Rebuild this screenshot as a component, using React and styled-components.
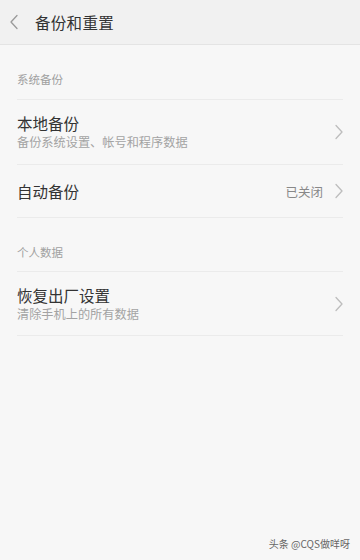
import React from "react";
import styled, { createGlobalStyle } from "styled-components";

const Global = createGlobalStyle`
  html, body { margin: 0; padding: 0; background: #f7f7f7; }
  body { font-family: "Noto Sans CJK SC", "Noto Sans", sans-serif; }
`;

const Page = styled.div`
  width: 360px;
  height: 560px;
  background: #f7f7f7;
  display: flex;
  flex-direction: column;
  position: relative;
  overflow: hidden;
`;

const Header = styled.div`
  height: 45px;
  background: #f1f1f1;
  border-bottom: 1px solid #e4e4e4;
  display: flex;
  align-items: center;
  padding-left: 9px;
  gap: 16px;
  box-sizing: border-box;
`;

const Title = styled.div`
  font-size: 15.5px;
  color: #333;
  letter-spacing: 0.3px;
`;

const Content = styled.div`
  padding: 0 17px;
  display: flex;
  flex-direction: column;
`;

const SectionTitle = styled.div`
  font-size: 11.5px;
  color: #a0a0a0;
  height: ${p => p.$h}px;
  display: flex;
  align-items: center;
  padding-top: 14px;
  box-sizing: border-box;
  border-bottom: 1px solid #ebebeb;
`;

const Row = styled.div`
  height: ${p => p.$h}px;
  display: flex;
  align-items: center;
  border-bottom: 1px solid #ebebeb;
  box-sizing: border-box;
`;

const Texts = styled.div`
  flex: 1;
  display: flex;
  flex-direction: column;
  gap: 1px;
`;

const RowTitle = styled.div`
  font-size: 15.5px;
  color: #333;
  line-height: 20px;
`;

const RowSub = styled.div`
  font-size: 12.2px;
  color: #a3a3a3;
  line-height: 17px;
`;

const Value = styled.div`
  font-size: 12.5px;
  color: #888;
  margin-right: 11px;
`;

const ChevronBox = styled.div`
  display: flex;
  margin-right: -1px;
`;

const Watermark = styled.div`
  position: absolute;
  right: 10px;
  bottom: 9px;
  font-size: 10px;
  color: #666;
  font-family: "Noto Sans CJK SC", sans-serif;
`;

const Chevron = ({ left }) => (
  <svg width="10" height="16" viewBox="0 0 10 16" fill="none">
    <path
      d={left ? "M8 1.5 L2 8 L8 14.5" : "M2 1.5 L8 8 L2 14.5"}
      stroke={left ? "#9a9a9a" : "#bdbdbd"}
      strokeWidth="1.3"
      strokeLinecap="round"
      strokeLinejoin="round"
    />
  </svg>
);

export default function App() {
  return (
    <Page>
      <Global />
      <Header>
        <Chevron left />
        <Title>备份和重置</Title>
      </Header>
      <Content>
        <SectionTitle $h={55}>系统备份</SectionTitle>
        <Row $h={65}>
          <Texts>
            <RowTitle>本地备份</RowTitle>
            <RowSub>备份系统设置、帐号和程序数据</RowSub>
          </Texts>
          <ChevronBox><Chevron /></ChevronBox>
        </Row>
        <Row $h={53}>
          <Texts>
            <RowTitle>自动备份</RowTitle>
          </Texts>
          <Value>已关闭</Value>
          <ChevronBox><Chevron /></ChevronBox>
        </Row>
        <SectionTitle $h={54}>个人数据</SectionTitle>
        <Row $h={64}>
          <Texts>
            <RowTitle>恢复出厂设置</RowTitle>
            <RowSub>清除手机上的所有数据</RowSub>
          </Texts>
          <ChevronBox><Chevron /></ChevronBox>
        </Row>
      </Content>
      <Watermark>头条 @CQS做咩呀</Watermark>
    </Page>
  );
}
